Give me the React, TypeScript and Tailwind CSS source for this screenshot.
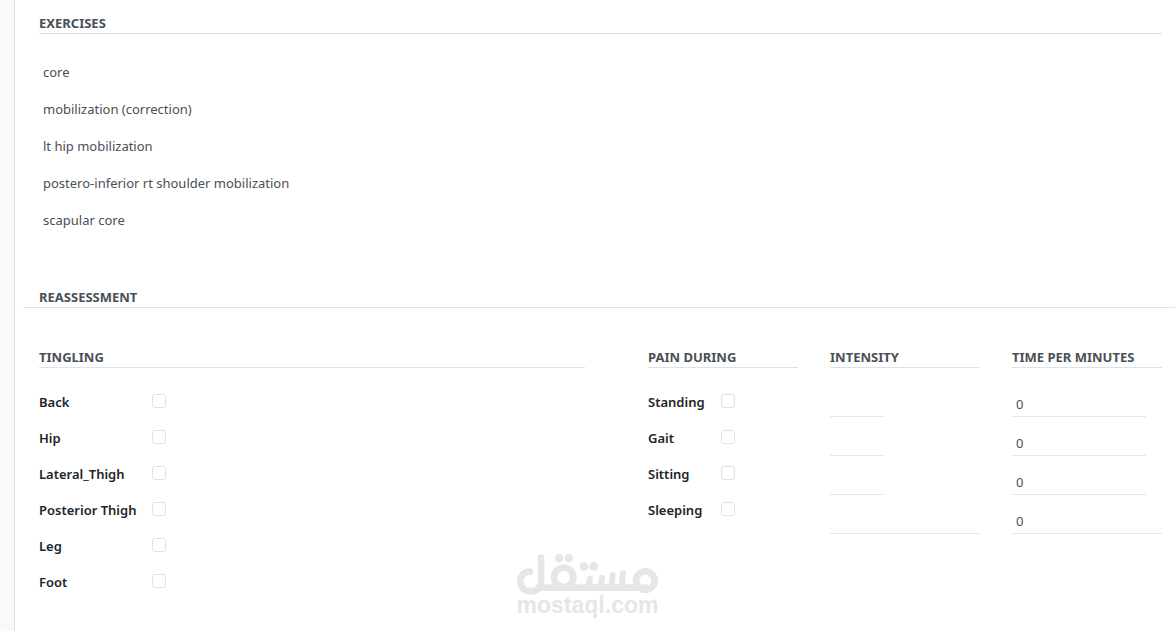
import React, { useState } from "react";

const exercises = [
  "core",
  "mobilization (correction)",
  "lt hip mobilization",
  "postero-inferior rt shoulder mobilization",
  "scapular core",
];

const tinglingAreas = ["Back", "Hip", "Lateral_Thigh", "Posterior Thigh", "Leg", "Foot"];

const painActivities = ["Standing", "Gait", "Sitting", "Sleeping"];

interface SectionTitleProps {
  children: React.ReactNode;
  className?: string;
}

const SectionTitle: React.FC<SectionTitleProps> = ({ children, className = "" }) => (
  <h2
    className={`whitespace-nowrap border-b border-[#dee2e6] text-[13px] font-bold uppercase leading-5 text-[#495057] ${className}`}
  >
    {children}
  </h2>
);

interface CheckRowProps {
  label: string;
  labelWidth: string;
}

const CheckRow: React.FC<CheckRowProps> = ({ label, labelWidth }) => {
  const id = `check-${label.toLowerCase().replace(/\W/g, "-")}`;

  return (
    <div className="flex h-9 items-center">
      <label
        htmlFor={id}
        className={`shrink-0 whitespace-nowrap text-[13px] font-semibold leading-5 text-[#212529] ${labelWidth}`}
      >
        {label}
      </label>
      <input
        id={id}
        type="checkbox"
        className="mb-0.5 size-3.5 appearance-none rounded-[3px] border border-[#dee2e6] bg-white checked:border-[#714b67] checked:bg-[#714b67]"
      />
    </div>
  );
};

interface FieldProps {
  label: string;
  value: string;
  onChange: (value: string) => void;
  width: string;
}

const Field: React.FC<FieldProps> = ({ label, value, onChange, width }) => (
  <input
    type="text"
    aria-label={label}
    value={value}
    onChange={(e) => onChange(e.target.value)}
    className={`block h-[33px] border-b border-[#e4e7ea] bg-transparent px-1 pt-2 text-[13px] leading-5 text-[#495057] outline-none ${width}`}
  />
);

const Watermark: React.FC = () => (
  <div className="pointer-events-none absolute inset-x-0 bottom-4 flex flex-col items-center text-[#e6e6e6]">
    <svg
      viewBox="51 38 423 126"
      className="h-[42px] w-[141px]"
      fill="none"
      stroke="currentColor"
      strokeWidth="20"
      strokeLinecap="round"
      strokeLinejoin="round"
      aria-hidden="true"
    >
      <path d="M90 94C72 93 61 107 61 123C61 141 74 153 92 153C109 153 123 145 123 128V52" />
      <path d="M116 142H436" />
      <circle cx="191" cy="111" r="29" />
      <circle cx="436" cy="121" r="28" />
      <path d="M270 115L266 140M306 112L302 140M338 104L334 140M369 98L365 140" strokeWidth="18" />
      <g fill="currentColor" stroke="none">
        <circle cx="177" cy="53" r="13" />
        <circle cx="207" cy="53" r="13" />
        <circle cx="252" cy="78" r="13" />
        <circle cx="281" cy="78" r="13" />
      </g>
    </svg>
    <span className="font-['Liberation_Sans',Arial,sans-serif] text-[23px] font-bold leading-5">
      mostaql.com
    </span>
  </div>
);

export default function App() {
  const [intensity, setIntensity] = useState(["", "", "", ""]);
  const [minutes, setMinutes] = useState(["0", "0", "0", "0"]);

  const replaceAt = (list: string[], index: number, value: string) =>
    list.map((item, i) => (i === index ? value : item));

  return (
    <div className="relative flex min-h-screen bg-[#f8f9fb] pl-3.5 font-['Noto_Sans','Open_Sans',sans-serif]">
      <main className="min-w-0 flex-1 overflow-hidden border-l border-[#dee2e6] bg-white pl-6 pr-[13px] pt-[13px]">
        <section>
          <SectionTitle>Exercises</SectionTitle>
          <ul className="mt-[19px]">
            {exercises.map((exercise) => (
              <li
                key={exercise}
                className="flex h-[37px] items-center px-1 text-[13px] leading-5 text-[#495057]"
              >
                {exercise}
              </li>
            ))}
          </ul>
        </section>

        <section className="mt-[49px]">
          <SectionTitle className="-ml-4 -mr-[13px] pl-4">Reassessment</SectionTitle>

          <div className="mt-[39px] grid grid-cols-[546fr_514fr] gap-[63px]">
            <div>
              <SectionTitle>Tingling</SectionTitle>
              <div className="mt-4">
                {tinglingAreas.map((area) => (
                  <CheckRow key={area} label={area} labelWidth="w-[113px]" />
                ))}
              </div>
            </div>

            <div className="grid grid-cols-3 gap-8">
              <div>
                <SectionTitle>Pain during</SectionTitle>
                <div className="mt-4">
                  {painActivities.map((activity) => (
                    <CheckRow key={activity} label={activity} labelWidth="w-[73px]" />
                  ))}
                </div>
              </div>

              <div>
                <SectionTitle>Intensity</SectionTitle>
                <div className="mt-4 flex flex-col gap-1.5">
                  {painActivities.map((activity, i) => (
                    <Field
                      key={activity}
                      label={`${activity} intensity`}
                      value={intensity[i]}
                      onChange={(value) => setIntensity(replaceAt(intensity, i, value))}
                      width={i === 3 ? "w-full" : "w-[54px]"}
                    />
                  ))}
                </div>
              </div>

              <div>
                <SectionTitle>Time per minutes</SectionTitle>
                <div className="mt-4 flex flex-col gap-1.5">
                  {painActivities.map((activity, i) => (
                    <Field
                      key={activity}
                      label={`${activity} time per minutes`}
                      value={minutes[i]}
                      onChange={(value) => setMinutes(replaceAt(minutes, i, value))}
                      width={i === 3 ? "w-full" : "w-[134px]"}
                    />
                  ))}
                </div>
              </div>
            </div>
          </div>
        </section>
      </main>
      <Watermark />
    </div>
  );
}
